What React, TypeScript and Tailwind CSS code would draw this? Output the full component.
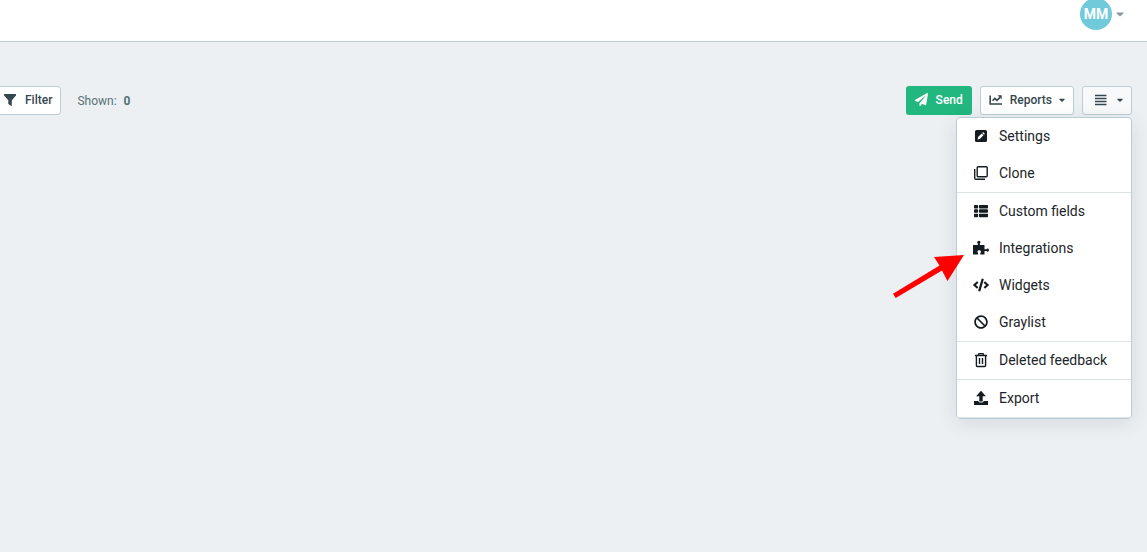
import type { ReactNode } from "react";
import { FaBan, FaCaretDown, FaCode, FaPaperPlane, FaThList } from "react-icons/fa";

function FilterIcon() {
  return (
    <svg viewBox="0 0 14 14" className="h-3.5 w-3.5" fill="currentColor" aria-hidden="true">
      <path d="M1 1h12v1.6L8.800 7.200v6L5.300 11V7.200L1 2.600z" />
    </svg>
  );
}

function ChartIcon() {
  return (
    <svg viewBox="0 0 14 12" className="h-3 w-3.5" fill="none" stroke="currentColor" aria-hidden="true">
      <path d="M1.200 1.500v8.500H13" strokeWidth="1.6" />
      <path d="M3.600 6.800l2.200-2.400 2.200 2 3-3" strokeWidth="1.700" />
      <path d="M8.700 1.300h4v4z" fill="currentColor" stroke="none" />
    </svg>
  );
}

function LinesIcon() {
  return (
    <svg viewBox="0 0 12 12" className="h-3 w-3" fill="none" stroke="currentColor" strokeWidth="1.3" aria-hidden="true">
      <path d="M0 1.500h11.500M0 4.500h11.500M0 7.500h11.500M0 10.500h11.500" />
    </svg>
  );
}

function SettingsIcon() {
  return (
    <svg viewBox="0 0 16 16" className="h-4 w-4" aria-hidden="true">
      <rect x="2" y="2" width="12" height="12" rx="1.5" fill="currentColor" />
      <path d="M4.600 11.400l.5-2.300 3.600-3.600 1.800 1.800-3.600 3.600zM9.200 5l.9-.9 1.800 1.800-.9.9z" fill="white" />
    </svg>
  );
}

function CloneIcon() {
  return (
    <svg viewBox="0 0 16 16" className="h-4 w-4" fill="none" stroke="currentColor" strokeWidth="1.4" aria-hidden="true">
      <rect x="4.2" y="1.7" width="10" height="10" rx="1" />
      <path d="M1.700 4v9c0 .8.4 1.200 1.200 1.200H12" />
    </svg>
  );
}

function PuzzleIcon() {
  return (
    <svg viewBox="0 0 16 16" className="h-4 w-4" fill="currentColor" aria-hidden="true">
      <path d="M0 5h4.800V3.600A1.800 1.800 0 0 1 4.200 2.300a1.600 1.600 0 0 1 3.300 0c0 .6-.3 1-.7 1.300V5h4.700v4.200h2c.3-.5.6-.7 1-.7.800 0 1.500.7 1.500 1.600s-.7 1.600-1.500 1.600c-.4 0-.7-.2-1-.6h-2v3.500H7.300v-1.600c.5-.3.7-.7.7-1.200 0-.9-.800-1.600-1.800-1.600s-1.800.7-1.800 1.600c0 .5.3.9.7 1.200v1.600H0z" />
    </svg>
  );
}

function TrashIcon() {
  return (
    <svg viewBox="0 0 16 16" className="h-4 w-4" fill="none" stroke="currentColor" strokeWidth="1.4" aria-hidden="true">
      <path d="M2 3.500h12M5.300 3.300l.7-1.700h4l.7 1.700M3.400 3.500v10c0 .7.4 1 1 1h7.200c.6 0 1-.3 1-1v-10" />
      <path d="M6.500 6v6M9.500 6v6" />
    </svg>
  );
}

function ExportIcon() {
  return (
    <svg viewBox="0 0 16 16" className="h-4 w-4" fill="currentColor" aria-hidden="true">
      <path d="M8 .8l4.900 5.400H9.700v5.300H6.300V6.200H3.100z" />
      <path d="M1 11h4.300c.2 1.100 1.200 1.500 2.700 1.500s2.500-.4 2.700-1.500H15v4H1z" />
    </svg>
  );
}

const groups: { label: string; icon: ReactNode }[][] = [
  [
    { label: "Settings", icon: <SettingsIcon /> },
    { label: "Clone", icon: <CloneIcon /> },
  ],
  [
    { label: "Custom fields", icon: <FaThList className="h-4 w-3.5" /> },
    { label: "Integrations", icon: <PuzzleIcon /> },
    { label: "Widgets", icon: <FaCode className="h-3.5 w-[17px]" /> },
    { label: "Graylist", icon: <FaBan className="h-3.5 w-3.5" /> },
  ],
  [{ label: "Deleted feedback", icon: <TrashIcon /> }],
  [{ label: "Export", icon: <ExportIcon /> }],
];

function OptionsMenu() {
  return (
    <div
      role="menu"
      aria-label="Options"
      className="absolute top-full right-0 mt-0.5 w-44 divide-y divide-[#dce3e7] rounded border border-[#bdcdd5] bg-white text-sm font-normal text-[#1c2529] shadow-[0_4px_20px_rgba(40,60,70,0.12)]"
    >
      {groups.map((items) => (
        <div key={items[0].label} role="group">
          {items.map((item) => (
            <button key={item.label} type="button" role="menuitem" className="flex h-[37px] w-full items-center gap-2.5 px-4 pb-0.5 text-left">
              <span className="flex w-4 shrink-0 justify-center text-[#141c1f]">{item.icon}</span>
              <span>{item.label}</span>
            </button>
          ))}
        </div>
      ))}
      <svg
        viewBox="0 0 72 44"
        className="pointer-events-none absolute top-[136px] -left-16 h-11 w-[72px]"
        fill="#ff0000"
        aria-hidden="true"
      >
        <path d="M71 1 41 3l5.500 8.500L0 39.800l2.700 4.200L49 16.500l5.500 10.500z" />
      </svg>
    </div>
  );
}

export default function App() {
  return (
    <div className="min-h-screen bg-[#ecf0f3] font-[Roboto,sans-serif]">
      <header className="flex h-[42px] items-start justify-end border-b border-[#bfcbd2] bg-white px-[23px]">
        <button type="button" aria-label="Account menu" className="-mt-0.5 flex items-center gap-1">
          <span className="flex h-8 w-8 items-center justify-center rounded-full bg-[#70cada] text-sm font-bold text-white">MM</span>
          <FaCaretDown className="h-3 w-2 text-[#8b999f]" preserveAspectRatio="none" />
        </button>
      </header>
      <main className="flex items-center justify-between pt-11 pr-[15px]">
        <div className="flex items-center gap-4 text-xs text-[#587079]">
          <button
            type="button"
            className="flex h-[29px] items-center gap-2 rounded-r border border-l-0 border-[#bdcdd5] bg-white pr-2 pb-0.5 pl-[3px] font-medium text-[#37474f]"
          >
            <FilterIcon />
            Filter
          </button>
          <p className="flex gap-[7px]">
            <span>Shown:</span>
            <strong>0</strong>
          </p>
        </div>
        <div className="flex gap-2 text-xs font-medium text-[#37474f]">
          <button type="button" className="flex h-[29px] items-center gap-2 rounded-[3px] bg-[#22b77f] px-[9px] pb-0.5 text-white">
            <FaPaperPlane className="h-[13px] w-[13px]" />
            Send
          </button>
          <button type="button" className="flex h-[29px] items-center gap-[7px] rounded-[3px] border border-[#bdcdd5] bg-white px-2 pb-0.5">
            <ChartIcon />
            Reports
            <FaCaretDown className="h-2.5 w-1.5" />
          </button>
          <div className="relative">
            <button
              type="button"
              aria-label="Options"
              aria-haspopup="menu"
              aria-expanded="true"
              className="flex h-[29px] w-[50px] items-center justify-end gap-2.5 rounded-[3px] border border-[#bdcdd5] bg-[#f7f9fa] pr-2 pb-0.5"
            >
              <LinesIcon />
              <FaCaretDown className="h-2.5 w-1.5" />
            </button>
            <OptionsMenu />
          </div>
        </div>
      </main>
    </div>
  );
}
